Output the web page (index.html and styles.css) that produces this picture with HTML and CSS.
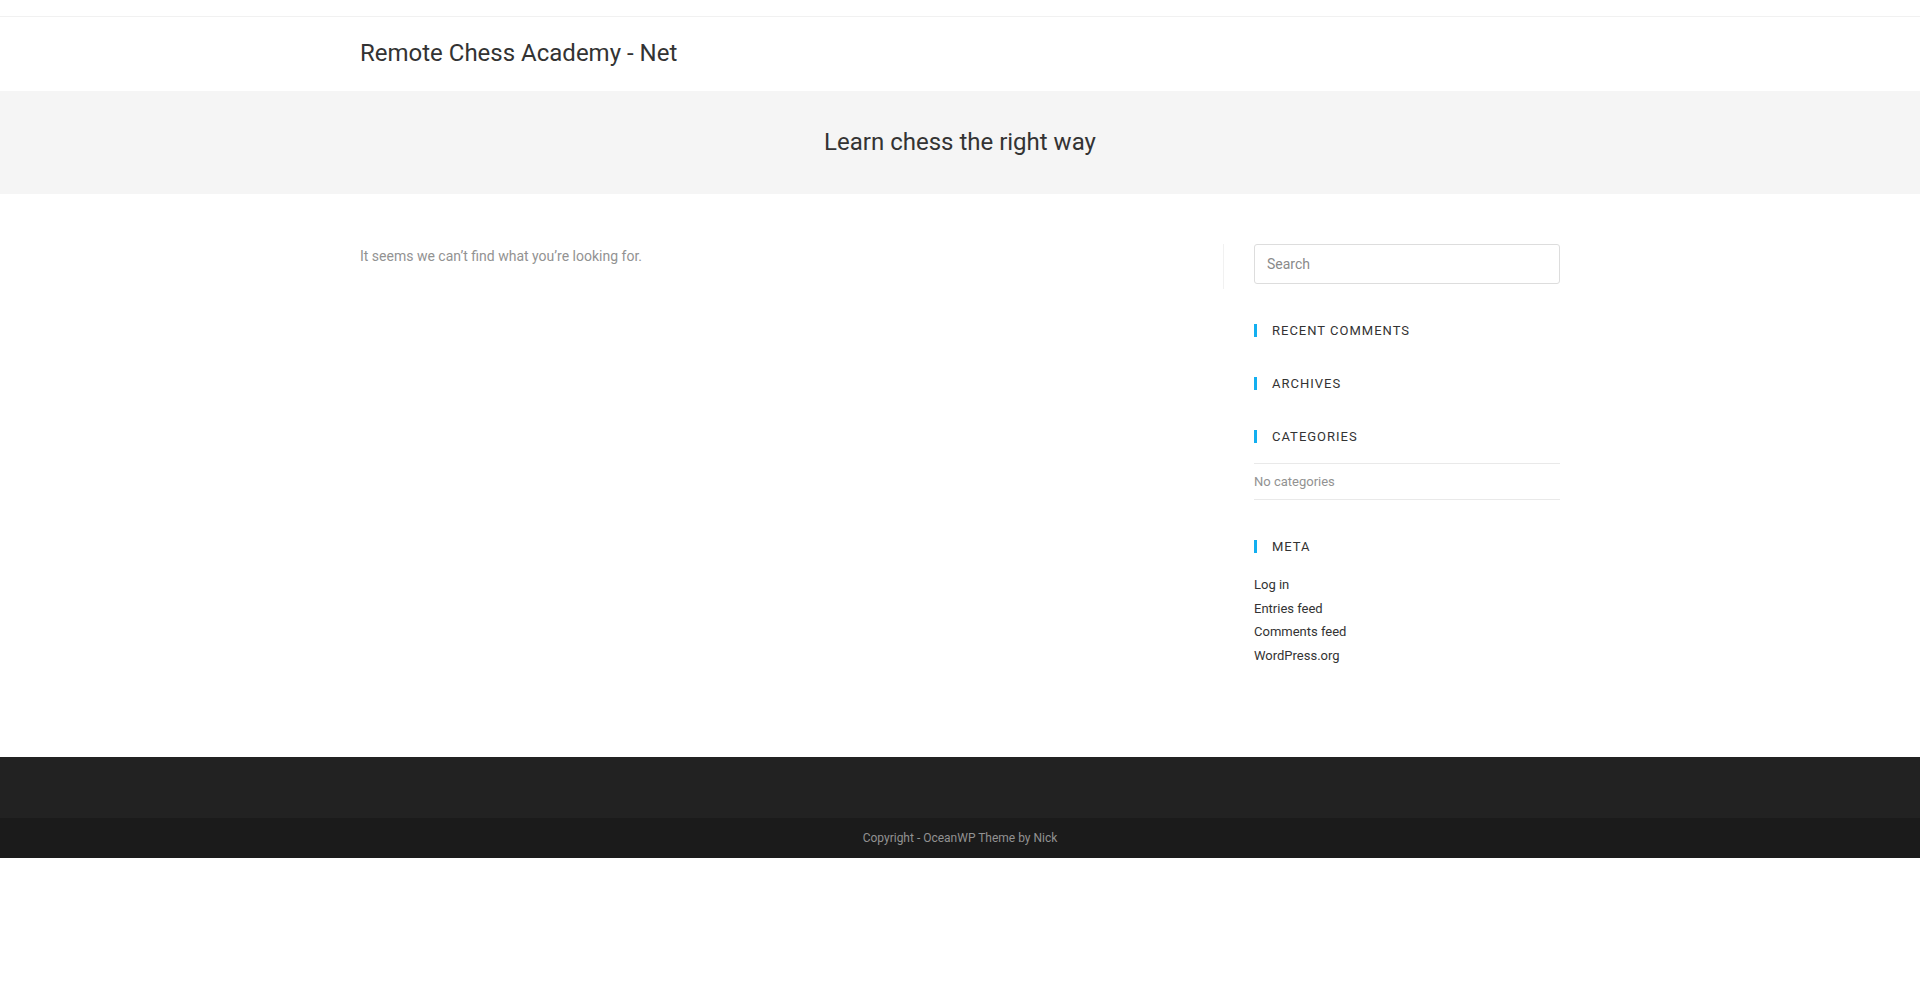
FILE: index.html
```
<!DOCTYPE html>
<html>
<head>
    <meta charset="UTF-8">
    <title>Nothing Found - Remote Chess Academy - Net</title>
    <link rel="stylesheet" href="styles.css">
</head>
<body>
    <!-- top bar -->
    <div class="top-bar"></div>

    <!-- header -->
    <header class="site-header">
        <div class="container">
            <a class="site-logo" href="#">Remote Chess Academy - Net</a>
        </div>
    </header>

    <!-- page title -->
    <div class="page-header">
        <h1 class="page-title">Learn chess the right way</h1>
    </div>

    <!-- main -->
    <main class="site-main">
        <div class="container content-wrap">
            <div class="content-area">
                <p class="no-results">It seems we can’t find what you’re looking for.</p>
            </div>

            <aside class="sidebar">
                <div class="sidebar-box">
                    <input class="search-field" type="search" placeholder="Search">
                </div>
                <div class="sidebar-box">
                    <h4 class="widget-title">Recent Comments</h4>
                </div>
                <div class="sidebar-box">
                    <h4 class="widget-title">Archives</h4>
                </div>
                <div class="sidebar-box">
                    <h4 class="widget-title">Categories</h4>
                    <ul class="cat-list">
                        <li>No categories</li>
                    </ul>
                </div>
                <div class="sidebar-box">
                    <h4 class="widget-title">Meta</h4>
                    <ul class="meta-list">
                        <li><a href="#">Log in</a></li>
                        <li><a href="#">Entries feed</a></li>
                        <li><a href="#">Comments feed</a></li>
                        <li><a href="#">WordPress.org</a></li>
                    </ul>
                </div>
            </aside>
        </div>
    </main>

    <!-- footer -->
    <footer class="site-footer">
        <div class="footer-widgets"></div>
        <div class="footer-bottom">
            <span class="copyright">Copyright - OceanWP Theme by Nick</span>
        </div>
    </footer>
</body>
</html>
```

FILE: styles.css
```
* { margin: 0; padding: 0; box-sizing: border-box; }
body {
    background: #fff;
    color: #929292;
    font-family: Roboto, "Liberation Sans", Arial, sans-serif;
    font-size: 14px;
    line-height: 1.8;
}
a { text-decoration: none; }
ul { list-style: none; }

.container {
    width: 1200px;
    margin: 0 auto;
}

/* top bar */
.top-bar {
    height: 17px;
    border-bottom: 1px solid #f1f1f1;
}

/* header */
.site-header {
    height: 74px;
    background: #fff;
}
.site-header .container {
    height: 100%;
    display: flex;
    align-items: center;
    padding-bottom: 2px;
}
.site-logo {
    color: #333;
    font-size: 24px;
    line-height: 1;
}

/* page title */
.page-header {
    height: 103px;
    background: #f5f5f5;
    display: flex;
    align-items: center;
    justify-content: center;
}
.page-title {
    color: #333;
    font-size: 24px;
    font-weight: 400;
    line-height: 1.4;
}

/* main */
.site-main {
    padding: 50px 0;
}
.content-wrap {
    display: flex;
    align-items: flex-start;
}
.content-area {
    width: 72%;
    padding-right: 30px;
    border-right: 1px solid #f1f1f1;
}
.no-results {
    margin-bottom: 20px;
}

.sidebar {
    width: 28%;
    padding-left: 30px;
}
.sidebar-box {
    margin-bottom: 40px;
}
.search-field {
    display: block;
    width: 100%;
    height: 40px;
    padding: 6px 12px;
    border: 1px solid #ddd;
    border-radius: 3px;
    font-family: inherit;
    font-size: 14px;
    color: #333;
    outline: none;
}
.search-field::placeholder { color: #8a8a8a; }

.widget-title {
    display: block;
    line-height: 1;
    margin-bottom: 20px;
    padding-left: 15px;
    border-left: 3px solid #13aff0;
    color: #333;
    font-size: 13px;
    font-weight: 400;
    letter-spacing: 1px;
    text-transform: uppercase;
}

.cat-list li {
    font-size: 13px;
    padding: 6px 0;
    border-top: 1px solid #e9e9e9;
    border-bottom: 1px solid #e9e9e9;
}

.meta-list li {
    font-size: 13px;
}
.meta-list a {
    color: #333;
}

/* footer */
.footer-widgets {
    height: 61px;
    background: #222;
}
.footer-bottom {
    height: 40px;
    background: #1b1b1b;
    display: flex;
    align-items: center;
    justify-content: center;
}
.copyright {
    color: #929292;
    font-size: 12px;
    line-height: 1;
}
```
